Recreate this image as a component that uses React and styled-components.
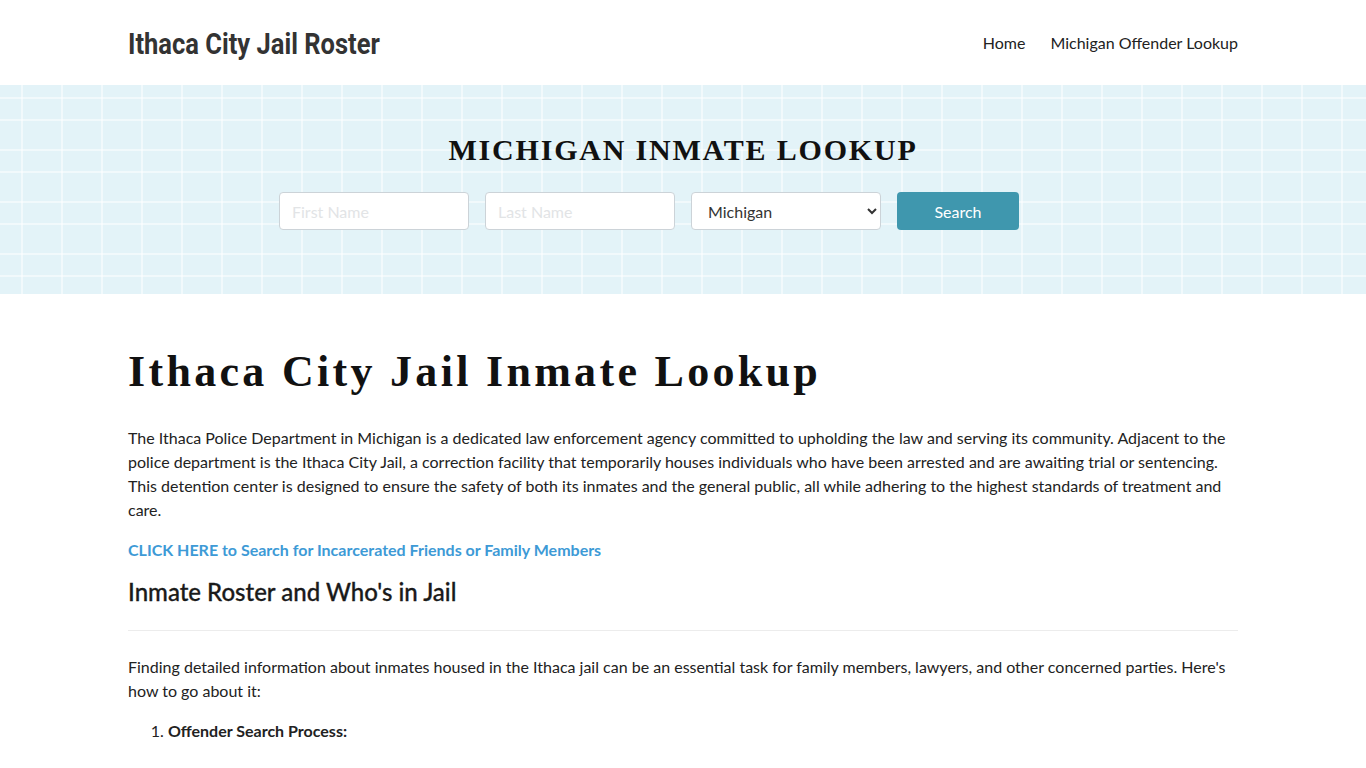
import React from 'react';
import styled, { createGlobalStyle } from 'styled-components';

const GlobalStyle = createGlobalStyle`
  * { box-sizing: border-box; }
  body {
    margin: 0;
    font-family: Lato, "Open Sans", sans-serif;
    font-size: 16px;
    color: #222;
    background: #fff;
  }
`;

const Container = styled.div`
  width: 1110px;
  margin: 0 auto;
`;

const Header = styled.header`
  height: 85px;
  background: #fff;
`;

const HeaderInner = styled(Container)`
  display: flex;
  align-items: center;
  justify-content: space-between;
  height: 100%;
`;

// no condensed face installed, so squeeze a bold sans
const Logo = styled.a`
  display: inline-block;
  font-family: Roboto, "Liberation Sans", sans-serif;
  font-weight: 700;
  font-size: 30px;
  color: #333;
  text-decoration: none;
  transform: scaleX(0.85);
  transform-origin: left center;
  margin-top: 1px;
`;

const Nav = styled.ul`
  list-style: none;
  display: flex;
  gap: 25px;
  margin: 0;
  padding: 0;

  li a {
    font-size: 16px;
    color: #222;
    text-decoration: none;
  }
`;

const Hero = styled.section`
  height: 209px;
  background-color: #e3f3f8;
  background-image:
    repeating-linear-gradient(90deg, transparent 0 21px, rgba(255,255,255,0.5) 21px 23px, transparent 23px 40px),
    repeating-linear-gradient(180deg, transparent 0 12px, rgba(255,255,255,0.5) 12px 14px, transparent 14px 34px, rgba(255,255,255,0.5) 34px 36px, transparent 36px 52px);
  padding-top: 47px;
`;

const HeroTitle = styled.h2`
  margin: 0;
  text-align: center;
  font-family: "Liberation Serif", "DejaVu Serif", serif;
  font-weight: 700;
  font-size: 30px;
  letter-spacing: 1.8px;
  color: #111;
  line-height: 36px;
`;

const SearchForm = styled.form`
  display: flex;
  justify-content: center;
  gap: 16px;
  margin-top: 24px;
  padding-right: 68px;
`;

const Field = styled.input`
  width: 190px;
  height: 38px;
  border: 1px solid #ccd3d8;
  border-radius: 4px;
  padding: 0 12px;
  font-family: Lato, sans-serif;
  font-size: 16px;
  color: #333;
  background: #fff;

  &::placeholder { color: #e2e4e6; }
`;

const Select = styled.select`
  width: 190px;
  height: 38px;
  border: 1px solid #ccd3d8;
  border-radius: 4px;
  padding: 0 12px;
  font-family: Lato, sans-serif;
  font-size: 16px;
  color: #333;
  background: #fff;
`;

const Button = styled.button`
  width: 122px;
  height: 38px;
  border: none;
  border-radius: 4px;
  background: #3f97ae;
  color: #fff;
  font-family: Lato, sans-serif;
  font-size: 16px;
`;

const Main = styled(Container)`
  padding-top: 50px;
`;

const Title = styled.h1`
  margin: 0 0 26px;
  font-family: "Liberation Serif", "DejaVu Serif", serif;
  font-weight: 700;
  font-size: 44px;
  letter-spacing: 3.3px;
  line-height: 56px;
  color: #111;
`;

const Para = styled.p`
  margin: 0 0 16px;
  font-size: 16px;
  line-height: 24px;
  color: #222;
`;

const CallLink = styled.a`
  display: block;
  font-weight: 700;
  font-size: 16px;
  line-height: 24px;
  color: #3d9ad6;
  text-decoration: none;
  margin-bottom: 15px;
`;

const Subhead = styled.h2`
  margin: 0;
  font-size: 24px;
  font-weight: 500;
  line-height: 30px;
  color: #1a1a1a;
  -webkit-text-stroke: 0.3px #1a1a1a;
`;

const Rule = styled.hr`
  border: none;
  border-top: 1px solid #ececec;
  margin: 23px 0 24px;
`;

const Steps = styled.ol`
  margin: 0;
  padding-left: 40px;
  font-size: 16px;
  line-height: 24px;

  li strong { font-weight: 700; }
`;

export default function App() {
  return (
    <>
      <GlobalStyle />
      <Header>
        <HeaderInner>
          <Logo href="#">Ithaca City Jail Roster</Logo>
          <Nav>
            <li><a href="#">Home</a></li>
            <li><a href="#">Michigan Offender Lookup</a></li>
          </Nav>
        </HeaderInner>
      </Header>
      <Hero>
        <HeroTitle>MICHIGAN INMATE LOOKUP</HeroTitle>
        <SearchForm onSubmit={e => e.preventDefault()}>
          <Field placeholder="First Name" />
          <Field placeholder="Last Name" />
          <Select defaultValue="Michigan">
            <option>Michigan</option>
          </Select>
          <Button type="submit">Search</Button>
        </SearchForm>
      </Hero>
      <Main>
        <Title>Ithaca City Jail Inmate Lookup</Title>
        <Para>
          The Ithaca Police Department in Michigan is a dedicated law enforcement agency committed to upholding the law and serving its community. Adjacent to the police department is the Ithaca City Jail, a correction facility that temporarily houses individuals who have been arrested and are awaiting trial or sentencing. This detention center is designed to ensure the safety of both its inmates and the general public, all while adhering to the highest standards of treatment and care.
        </Para>
        <CallLink href="#">CLICK HERE to Search for Incarcerated Friends or Family Members</CallLink>
        <Subhead>Inmate Roster and Who's in Jail</Subhead>
        <Rule />
        <Para>
          Finding detailed information about inmates housed in the Ithaca jail can be an essential task for family members, lawyers, and other concerned parties. Here's how to go about it:
        </Para>
        <Steps>
          <li><strong>Offender Search Process:</strong></li>
        </Steps>
      </Main>
    </>
  );
}
